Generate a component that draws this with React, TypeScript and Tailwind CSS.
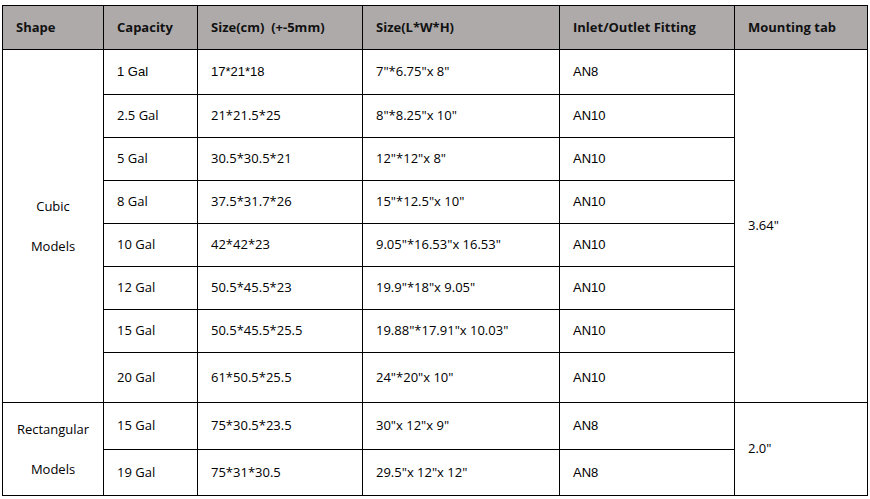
import React from 'react';

const arial = "font-['Liberation_Sans',Arial,sans-serif]";
const segoe = "font-['Open_Sans','Noto_Sans',sans-serif]";

type Row = {
  cap: string;
  cm: string;
  inch: string;
  fit: string;
  h: string;
  arialFirst?: boolean;
};

const cubic: Row[] = [
  { cap: '1 Gal', cm: '17*21*18', inch: '7"*6.75"x 8"', fit: 'AN8', h: 'h-[45px]', arialFirst: true },
  { cap: '2.5 Gal', cm: '21*21.5*25', inch: '8"*8.25"x 10"', fit: 'AN10', h: 'h-[43px]' },
  { cap: '5 Gal', cm: '30.5*30.5*21', inch: '12"*12"x 8"', fit: 'AN10', h: 'h-[43px]' },
  { cap: '8 Gal', cm: '37.5*31.7*26', inch: '15"*12.5"x 10"', fit: 'AN10', h: 'h-[43px]' },
  { cap: '10 Gal', cm: '42*42*23', inch: '9.05"*16.53"x 16.53"', fit: 'AN10', h: 'h-[43px]' },
  { cap: '12 Gal', cm: '50.5*45.5*23', inch: '19.9"*18"x 9.05"', fit: 'AN10', h: 'h-[43px]' },
  { cap: '15 Gal', cm: '50.5*45.5*25.5', inch: '19.88"*17.91"x 10.03"', fit: 'AN10', h: 'h-[43px]' },
  { cap: '20 Gal', cm: '61*50.5*25.5', inch: '24"*20"x 10"', fit: 'AN10', h: 'h-[50px]' },
];

const rect: Row[] = [
  { cap: '15 Gal', cm: '75*30.5*23.5', inch: '30"x 12"x 9"', fit: 'AN8', h: 'h-[47px]' },
  { cap: '19 Gal', cm: '75*31*30.5', inch: '29.5"x 12"x 12"', fit: 'AN8', h: 'h-[46px]' },
];

const cell = 'border border-black align-middle text-[13px] text-black';
const td = `${cell} pl-[13px]`;
const th = 'border border-black pl-[13px] align-middle text-left text-[13px] font-bold text-[#111]';

function Body({ rows, label, mount }: { rows: Row[]; label: string[]; mount: string }) {
  return (
    <>
      {rows.map((r, i) => (
        <tr key={r.cap + r.cm} className={r.h}>
          {i === 0 && (
            <td rowSpan={rows.length} className={`${cell} ${segoe} text-center`}>
              <p className="leading-[18px]">{label[0]}</p>
              <p className="mt-[22px] leading-[18px]">{label[1]}</p>
            </td>
          )}
          <td className={`${td} ${r.arialFirst ? arial : segoe}`}>{r.cap}</td>
          <td className={`${td} ${r.arialFirst ? arial : segoe}`}>{r.cm}</td>
          <td className={`${td} ${segoe}`}>{r.inch}</td>
          <td className={`${td} ${arial}`}>{r.fit}</td>
          {i === 0 && (
            <td rowSpan={rows.length} className={`${td} ${segoe}`}>
              {mount}
            </td>
          )}
        </tr>
      ))}
    </>
  );
}

export default function App() {
  return (
    <div className="min-h-screen bg-white pl-[2px] pt-[5px]">
      <table className="w-[866px] table-fixed border-collapse">
        <colgroup>
          <col className="w-[101px]" />
          <col className="w-[94px]" />
          <col className="w-[165px]" />
          <col className="w-[197px]" />
          <col className="w-[175px]" />
          <col className="w-[133px]" />
        </colgroup>
        <thead>
          <tr className={`h-[44px] bg-[#aeaaaa] ${segoe}`}>
            <th className={th}>Shape</th>
            <th className={th}>Capacity</th>
            <th className={th}>Size(cm)&nbsp;&nbsp;(+-5mm)</th>
            <th className={th}>Size(L*W*H)</th>
            <th className={th}>Inlet/Outlet Fitting</th>
            <th className={th}>Mounting tab</th>
          </tr>
        </thead>
        <tbody>
          <Body rows={cubic} label={['Cubic', 'Models']} mount={'3.64"'} />
          <Body rows={rect} label={['Rectangular', 'Models']} mount={'2.0"'} />
        </tbody>
      </table>
    </div>
  );
}
